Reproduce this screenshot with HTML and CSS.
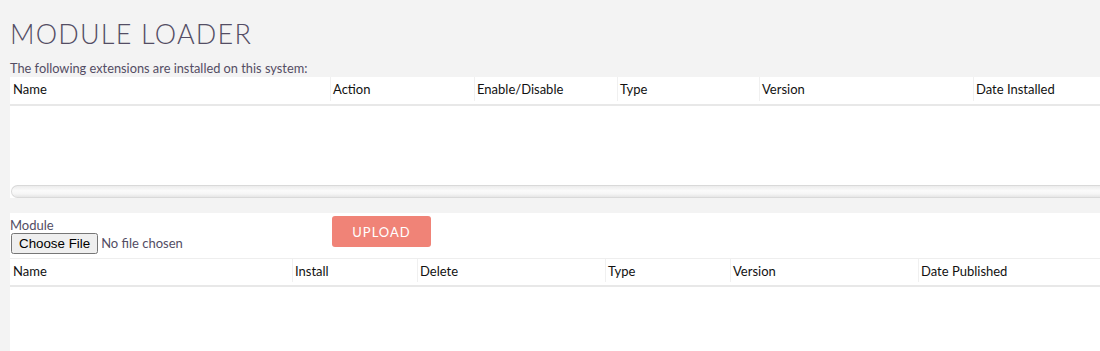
FILE: index.html
```html
<!DOCTYPE html>
<html>
<head>
<meta charset="utf-8">
<link rel="stylesheet" href="styles.css">
</head>
<body>
<div class="page">
  <h1 class="title">MODULE LOADER</h1>
  <p class="intro">The following extensions are installed on this system:</p>
  <div class="panel installed">
    <div class="thead cols-installed">
      <div class="th">Name</div>
      <div class="th">Action</div>
      <div class="th">Enable/Disable</div>
      <div class="th">Type</div>
      <div class="th">Version</div>
      <div class="th">Date Installed</div>
    </div>
    <div class="tbody"></div>
    <div class="hscroll"></div>
  </div>
  <div class="gap"></div>
  <div class="panel upload-panel">
    <div class="upload-row">
      <div class="field">
        <label class="field-label" for="mod">Module</label>
        <input id="mod" class="file" type="file">
      </div>
      <button class="btn-upload" type="button">UPLOAD</button>
    </div>
    <div class="thead cols-available">
      <div class="th">Name</div>
      <div class="th">Install</div>
      <div class="th">Delete</div>
      <div class="th">Type</div>
      <div class="th">Version</div>
      <div class="th">Date Published</div>
    </div>
    <div class="tbody2"></div>
  </div>
</div>
</body>
</html>
```
FILE: styles.css
```css
html, body {
  margin: 0;
  padding: 0;
  background: #f3f3f3;
}
body {
  font-family: Lato, "Open Sans", sans-serif;
  color: #534d64;
  height: 351px;
  overflow: hidden;
}
.page {
  padding-left: 10px;
}
.title {
  margin: 0;
  padding-top: 19px;
  font-weight: 300;
  font-size: 27px;
  line-height: 30px;
  letter-spacing: 1.2px;
  color: #534d64;
}
.intro {
  margin: 11px 0 0 0;
  font-size: 12.8px;
  line-height: 17px;
  color: #534d64;
}
.panel {
  background: #fff;
}
.thead {
  display: grid;
  height: 27px;
  border-bottom: 2px solid #e8e8e8;
  color: #111;
  font-size: 13px;
}
.cols-installed {
  grid-template-columns: 320px 144px 143px 142px 214px 1fr;
}
.cols-available {
  grid-template-columns: 282px 125px 188px 125px 188px 1fr;
  border-top: 1px solid #eeeeee;
  height: 26px;
}
.th {
  padding: 0 3px 0 2px;
  line-height: 14px;
  border-left: 1px solid #f0f0f0;
  margin: 0 0 3px 0;
  display: flex;
  align-items: center;
}
.th:first-child {
  border-left: none;
  padding-left: 3px;
}
.tbody {
  height: 79px;
}
.hscroll {
  height: 11px;
  margin-left: 1px;
  border: 1px solid #d9d9d9;
  border-right: none;
  border-radius: 7px 0 0 7px;
  background: linear-gradient(#ececec, #fafafa 40%, #f6f6f6 70%, #e6e6e6);
}
.gap {
  height: 15px;
  background: #f3f3f3;
  margin-left: 1px;
}
.upload-row {
  display: flex;
  align-items: flex-start;
  height: 45px;
}
.field {
  width: 322px;
  display: flex;
  flex-direction: column;
  padding-top: 5px;
}
.field-label {
  font-size: 13px;
  line-height: 15px;
  color: #534d64;
}
.file {
  margin: 0 0 0 1px;
  font-family: Lato, sans-serif;
  font-size: 13px;
  color: #534d64;
}
.file::file-selector-button {
  font-family: "Liberation Sans", Arial, sans-serif;
  font-size: 13.33px;
  color: #000;
  margin-right: 3px;
}
.btn-upload {
  margin-top: 3px;
  width: 99px;
  height: 31px;
  border: none;
  border-radius: 3px;
  background: #f08377;
  color: #fff;
  font-family: Lato, sans-serif;
  font-size: 13px;
  letter-spacing: 1px;
  padding: 0;
}
.tbody2 {
  height: 70px;
}
```
